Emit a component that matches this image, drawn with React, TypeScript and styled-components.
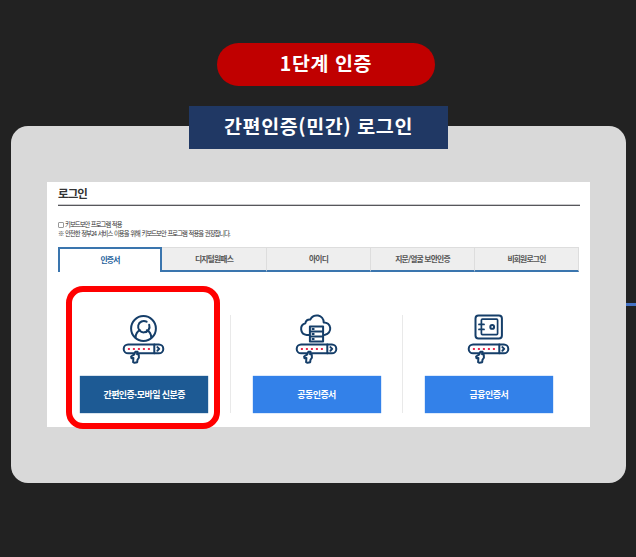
import React from "react";
import styled, { createGlobalStyle } from "styled-components";

const GlobalStyle = createGlobalStyle`
  * { box-sizing: border-box; }
  body {
    margin: 0;
    background: #222;
    font-family: "Noto Sans CJK KR", "Noto Sans", sans-serif;
    overflow: hidden;
  }
`;

const Page = styled.main`
  width: 636px;
  height: 557px;
  padding-top: 43px;
  background: #222;
`;

const StepPill = styled.div`
  width: 218px;
  height: 43px;
  margin-left: 217px;
  border-radius: 22px;
  background: #c00000;
  color: #fff;
  display: flex;
  align-items: center;
  justify-content: center;
  font-size: 19.5px;
  font-weight: 700;
  letter-spacing: 0.6px;
  line-height: 1;
  padding-bottom: 3px;
`;

const Banner = styled.h1`
  position: relative;
  z-index: 1;
  width: 259px;
  height: 43px;
  margin: 20px 0 0 189px;
  background: #203864;
  color: #fff;
  display: flex;
  align-items: center;
  justify-content: center;
  font-size: 19.5px;
  font-weight: 700;
  letter-spacing: 0.6px;
  line-height: 1;
  padding-bottom: 3px;
`;

const PanelRow = styled.div`
  display: flex;
  align-items: flex-start;
  margin: -23px 0 0 11px;
`;

const Panel = styled.section`
  flex: none;
  width: 615px;
  height: 357px;
  padding: 56px 36px;
  border-radius: 17px;
  background: #d9d9d9;
`;

const Connector = styled.div`
  flex: 1;
  height: 3px;
  margin-top: 177px;
  background: #4472c4;
`;

const LoginBox = styled.div`
  width: 543px;
  height: 245px;
  padding: 0 10px 0 11px;
  background: #fff;
`;

const Title = styled.h2`
  height: 24px;
  margin: 0;
  padding-top: 5px;
  border-bottom: 1px solid #57575b;
  box-shadow: inset 0 -1px 0 #c9c9cb;
  color: #333;
  font-size: 11.5px;
  font-weight: 700;
  line-height: 13px;
  letter-spacing: -0.9px;
`;

const Notice = styled.div`
  height: 41px;
  padding-top: 14px;
  color: #333;
  font-size: 6.3px;
  line-height: 9px;
  white-space: nowrap;
`;

const SecurityOption = styled.div`
  display: flex;
  align-items: center;
  gap: 1px;
  letter-spacing: -0.9px;
  word-spacing: 0.5px;
`;

const Checkbox = styled.span`
  width: 6px;
  height: 6px;
  border: 1px solid #999;
  border-radius: 1px;
`;

const NoticeText = styled.div`
  letter-spacing: -0.93px;
  word-spacing: 0.8px;
  margin-top: -0.5px;
`;

const Tabs = styled.nav`
  display: grid;
  grid-template-columns: 104px 105px 104px 104px 104px;
  height: 25px;
  width: 521px;
`;

const Tab = styled.div<{ $active?: boolean }>`
  display: flex;
  align-items: center;
  justify-content: center;
  font-size: 7.8px;
  font-weight: 700;
  line-height: 1;
  letter-spacing: -0.8px;
  padding-bottom: 1px;
  color: ${(p) => (p.$active ? "#24619c" : "#555")};
  background: ${(p) => (p.$active ? "#fff" : "#eee")};
  border-style: solid;
  border-width: ${(p) => (p.$active ? "2px 2px 0 2px" : "1px 1px 2px 0")};
  border-color: ${(p) => (p.$active ? "#3a75ae" : "#ddd #ddd #3a75ae")};
`;

const Methods = styled.div`
  display: grid;
  grid-template-columns: repeat(3, 172.3px);
  height: 155px;
  margin-left: 0.6px;
  padding-top: 43px;
`;

const Method = styled.article`
  position: relative;
  height: 98px;
  display: flex;
  flex-direction: column;
  align-items: center;
  gap: 9px;
  border-right: 1px solid #e9e9e9;
  &:last-child { border-right-color: transparent; }
`;

const MethodButton = styled.div<{ $primary?: boolean }>`
  width: 128px;
  height: 36.5px;
  display: flex;
  align-items: center;
  justify-content: center;
  color: #fff;
  background: ${(p) => (p.$primary ? "#1d5a94" : "#3381e9")};
  box-shadow: 0 0 1px ${(p) => (p.$primary ? "#1d5a94" : "#3381e9")};
  font-size: 9px;
  font-weight: 700;
  line-height: 1;
  letter-spacing: -0.55px;
`;

const Highlight = styled.div`
  position: absolute;
  left: 7.4px;
  top: -29px;
  width: 154px;
  height: 143px;
  border: 6px solid #f00;
  border-radius: 17px;
`;

const Icon = styled.svg`
  display: block;
  width: 46px;
  height: 52px;
  overflow: visible;
  flex: none;
`;

const NAVY = "#153e69";

// The password field and pointing hand shared by every method icon.
function PasswordField() {
  return (
    <>
      <rect x="2.7" y="29.5" width="39.6" height="8.8" rx="4.4" fill="#fff" />
      <path d="M33.3 29.5v8.8M36.4 32.1l1.8 1.8-1.8 1.8" />
      <path
        d="M6.9 34h2M11.9 34h2M16.9 34h2M21.9 34h2M26.9 34h2"
        stroke="#e72b50"
        strokeWidth="2"
        strokeLinecap="butt"
      />
      <path
        d="M14.3 36.8l-1 2.6-3.2 2.1.4 1.8 1.9-.3-.3 4.2 1.3.6 2.8-.6.3-2.5 1.4-2-.1-2.9-1.8-.8.6-2.2z"
        fill="#fff"
        strokeWidth="2"
      />
    </>
  );
}

function Symbol({ kind }: { kind: "person" | "cloud" | "safe" }) {
  return (
    <Icon viewBox="0 0 46 52" fill="none" stroke={NAVY} strokeWidth="2" strokeLinecap="round" strokeLinejoin="round">
      {kind === "person" && (
        <>
          <circle cx="22.5" cy="13.5" r="12.4" />
          <path d="M25.6 6.7A5.7 5.7 0 1 0 28.2 9.8" />
          <path d="M14.5 22.6c.3-3.8 1.8-6.2 4.5-7.4M25.8 15.2c2.7 1.2 4.2 3.6 4.5 7.4" />
        </>
      )}
      {kind === "cloud" && (
        <>
          <path d="M15.5 20h-2.8a6 6 0 0 1-1.4-11.7 4.8 4.8 0 0 1 5-3.7 7 7 0 0 1 13.4 2.8 6.2 6.2 0 0 1 1.4 12.3l-1.5.2" />
          <rect x="15.9" y="11.4" width="13.2" height="15" fill="#fff" />
          <path d="M16 16.4h13M16 21.4h13M18.5 14h1.2M18.5 19h1.2M18.5 24h1.2" />
        </>
      )}
      {kind === "safe" && (
        <>
          <rect x="9.5" y="0.4" width="26.4" height="23" rx="3" />
          <rect x="15.4" y="4.2" width="16.2" height="15.4" rx="1" strokeWidth="1.7" />
          <circle cx="26.2" cy="11.9" r="1.9" />
          <path d="M13 9.4h5M13 14.4h5" strokeWidth="1.8" />
        </>
      )}
      <PasswordField />
    </Icon>
  );
}

export default function App() {
  return (
    <>
      <GlobalStyle />
      <Page lang="ko">
        <StepPill>1단계 인증</StepPill>
        <Banner>간편인증(민간) 로그인</Banner>
        <PanelRow>
          <Panel>
            <LoginBox>
              <Title>로그인</Title>
              <Notice>
                <SecurityOption>
                  <Checkbox />
                  키보드보안 프로그램 적용
                </SecurityOption>
                <NoticeText>※ 안전한 정부24 서비스 이용을 위해 키보드보안 프로그램 적용을 권장합니다.</NoticeText>
              </Notice>
              <Tabs>
                <Tab $active>인증서</Tab>
                <Tab>디지털원패스</Tab>
                <Tab>아이디</Tab>
                <Tab>지문/얼굴 보안인증</Tab>
                <Tab>비회원로그인</Tab>
              </Tabs>
              <Methods>
                <Method>
                  <Symbol kind="person" />
                  <MethodButton $primary>간편인증·모바일 신분증</MethodButton>
                  <Highlight />
                </Method>
                <Method>
                  <Symbol kind="cloud" />
                  <MethodButton>공동인증서</MethodButton>
                </Method>
                <Method>
                  <Symbol kind="safe" />
                  <MethodButton>금융인증서</MethodButton>
                </Method>
              </Methods>
            </LoginBox>
          </Panel>
          <Connector />
        </PanelRow>
      </Page>
    </>
  );
}
